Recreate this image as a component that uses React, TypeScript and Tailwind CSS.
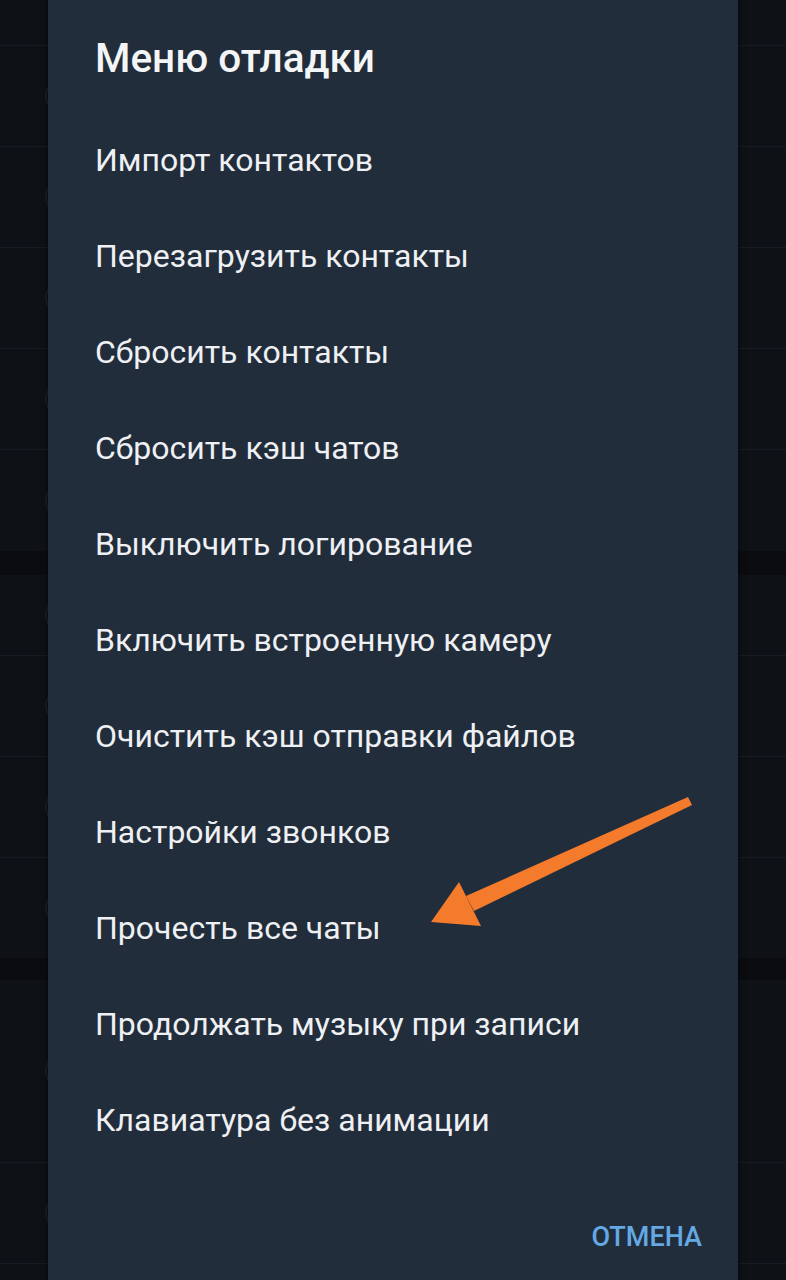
import React from 'react'

const items = [
  'Импорт контактов',
  'Перезагрузить контакты',
  'Сбросить контакты',
  'Сбросить кэш чатов',
  'Выключить логирование',
  'Включить встроенную камеру',
  'Очистить кэш отправки файлов',
  'Настройки звонков',
  'Прочесть все чаты',
  'Продолжать музыку при записи',
  'Клавиатура без анимации',
]

type BgRow = { h: string; border?: boolean; band?: boolean; icon?: boolean }

const bgRows: BgRow[] = [
  { h: 'h-[46px]', border: true },
  { h: 'h-[101px]', border: true, icon: true },
  { h: 'h-[101px]', border: true, icon: true },
  { h: 'h-[101px]', border: true, icon: true },
  { h: 'h-[101px]', border: true, icon: true },
  { h: 'h-[101px]', icon: true },
  { h: 'h-[24px]', band: true },
  { h: 'h-[81px]', border: true, icon: true },
  { h: 'h-[101px]', border: true, icon: true },
  { h: 'h-[101px]', border: true, icon: true },
  { h: 'h-[100px]', icon: true },
  { h: 'h-[22px]', band: true },
  { h: 'h-[183px]', border: true, icon: true },
  { h: 'h-[101px]', border: true, icon: true },
  { h: 'h-[40px]' },
]

function Arrow() {
  return (
    <svg className="pointer-events-none absolute left-0 top-0" width="786" height="1280" viewBox="0 0 786 1280">
      <polygon points="688,797 692,805 474,911 466,896" fill="#f47b2b" />
      <polygon points="431,922 459,882 481,926" fill="#f47b2b" />
    </svg>
  )
}

export default function App() {
  return (
    <div className="relative h-[1280px] w-[786px] overflow-hidden bg-[#0e1116] font-['Roboto',sans-serif]">
      <div className="flex flex-col">
        {bgRows.map((r, i) => (
          <div
            key={i}
            className={`${r.h} flex items-center ${r.border ? 'border-b border-[#181c22]' : ''} ${r.band ? 'bg-[#0a0c10]' : ''}`}
          >
            {r.icon ? <div className="ml-[45px] h-[36px] w-[36px] rounded-full border-2 border-[#1c2128]" /> : null}
          </div>
        ))}
      </div>

      <div className="absolute inset-0 flex justify-center">
        <div className="flex h-full w-[690px] flex-col bg-[#222d3b] shadow-[0_0_6px_rgba(0,0,0,0.7)]">
          <h2 className="pl-[47px] pt-[36px] text-[40.5px] font-medium leading-[44px] text-[#f4f5f7]">Меню отладки</h2>
          <div className="mt-[32px] flex flex-col">
            {items.map((t) => (
              <div key={t} className="flex h-[96px] items-center pl-[47px] text-[32px] leading-[40px] text-[#eef0f3]">
                {t}
              </div>
            ))}
          </div>
          <div className="mt-[49px] flex justify-end pr-[36px]">
            <button type="button" className="text-[27px] font-medium leading-[40px] text-[#64a9e4]">
              ОТМЕНА
            </button>
          </div>
        </div>
      </div>

      <Arrow />
    </div>
  )
}
